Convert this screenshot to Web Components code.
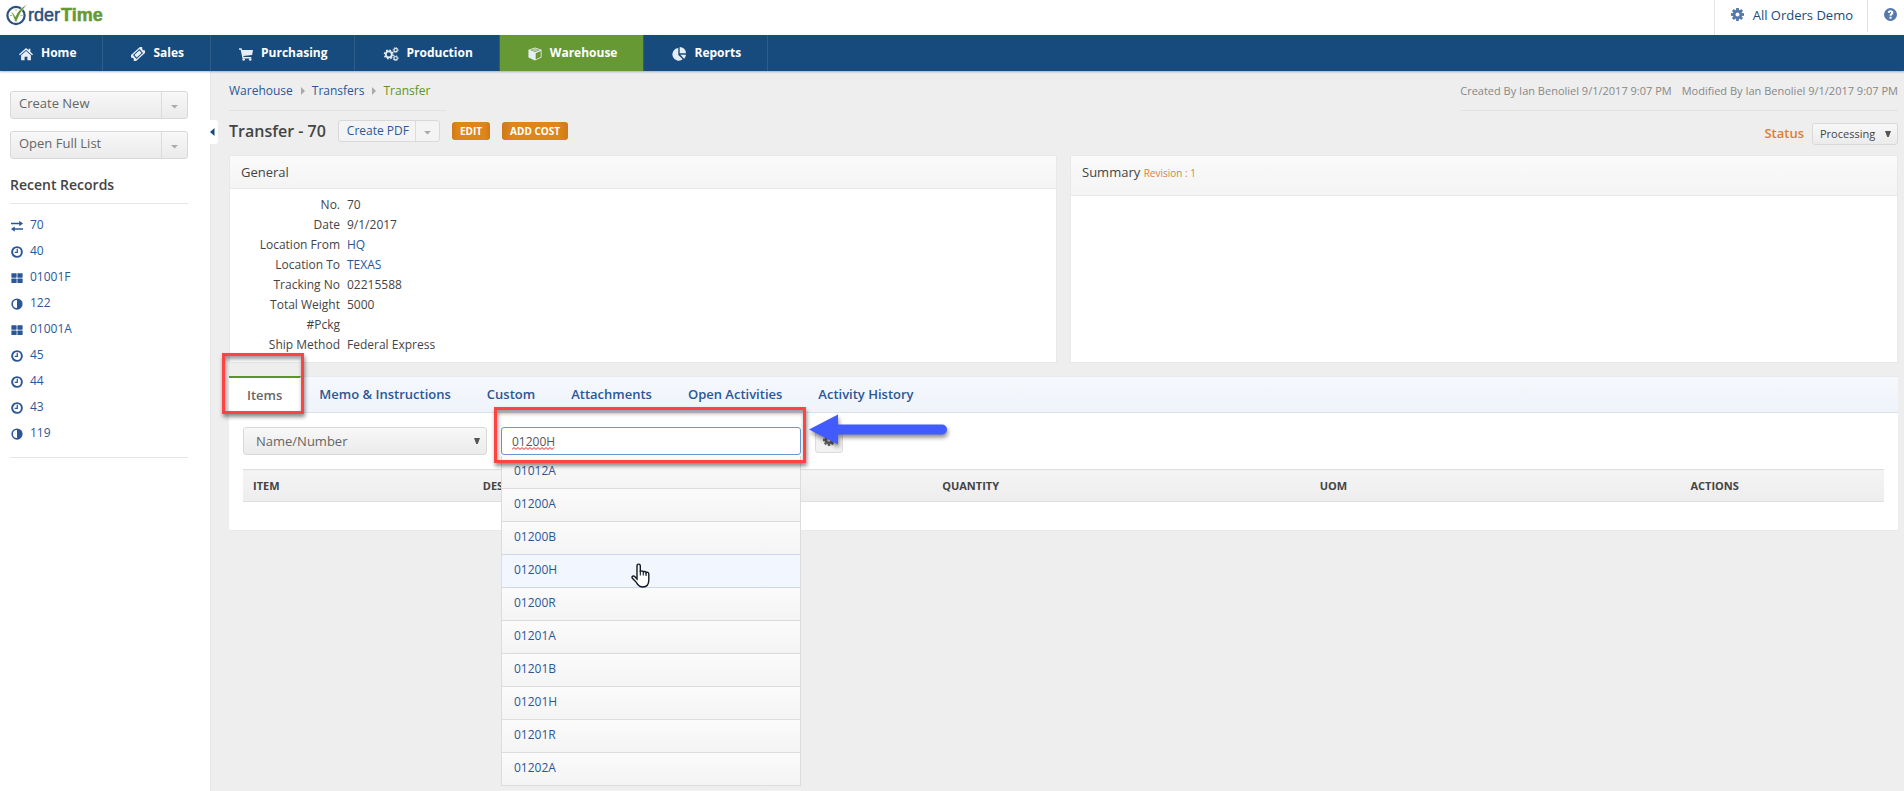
<!DOCTYPE html>
<html lang="en">
<head>
<meta charset="utf-8">
<title>OrderTime - Transfer 70</title>
<style>
  html { height: 100%; }
  body {
    margin: 0; min-height: 100%; display: flex; flex-direction: column;
    background: #eee; color: #444;
    font: 12px/20px "Open Sans", "Noto Sans", sans-serif;
    --navy: #184b7d; --green: #669933; --link: #2b5797; --line: #dedede; --orange: #dd7f33;
  }
</style>
</head>
<body>
<ot-app></ot-app>

<script>
const base = `
  *, *::before, *::after { box-sizing: border-box; }
  a { color: inherit; text-decoration: none; }
  button, input, select { font: inherit; color: inherit; margin: 0; }
  ul, ol { list-style: none; margin: 0; padding: 0; }
`;

function define(name, html, setup) {
  const template = document.createElement('template');
  template.innerHTML = html;
  customElements.define(name, class extends HTMLElement {
    connectedCallback() {
      if (this.shadowRoot) return;
      const root = this.attachShadow({ mode: 'open' });
      const style = document.createElement('style');
      style.textContent = base;
      const content = template.content.cloneNode(true);
      if (setup) setup.call(this, content);
      root.append(style, content);
    }
  });
}

const gearTeeth = (cx, cy, r, w, n) => Array.from({ length: n }, (_, i) =>
  `<rect x="${cx - w / 2}" y="${cy - r}" width="${w}" height="${r}" transform="rotate(${i * 360 / n} ${cx} ${cy})"/>`).join('');
const gear = `<mask id="m"><rect width="16" height="16" fill="#fff"/><circle cx="8" cy="8" r="2.4" fill="#000"/></mask><g mask="url(#m)"><circle cx="8" cy="8" r="5.8"/>${gearTeeth(8, 8, 8, 3.4, 8)}</g>`;

const icons = {
  home: '<path d="M8 1.2 0 8.2l1 1.2L8 3.4l7 6 1-1.2-3-2.7V2h-2v1.8z"/><path d="M8 4.6 2.4 9.4V15h4v-4h3.2v4h4V9.4z"/>',
  ticket: '<g transform="rotate(-42 8 8)"><path fill-rule="evenodd" d="M-.5 3.5h17v2.7a1.9 1.9 0 0 0 0 3.6v2.7h-17V9.800a1.900 1.900 0 0 0 0-3.600zM3 5v6h10V5z"/><path d="M4.200 6h7.600v4H4.200z"/></g>',
  cart: '<path d="M0 1.500h3l.5 2H16l-1 5.700-10 1 .3 1.300H14V13H4L1.900 3H0z"/><circle cx="5.300" cy="14.300" r="1.500"/><circle cx="12.800" cy="14.300" r="1.500"/>',
  gears: `<g fill="none" stroke="currentColor"><circle cx="5.500" cy="8.500" r="3.400" stroke-width="2"/><circle cx="5.500" cy="8.500" r="4.900" stroke-width="1.800" stroke-dasharray="1.950 1.900"/><circle cx="13.300" cy="3.500" r="1.900" stroke-width="1.300"/><circle cx="13.300" cy="3.500" r="2.900" stroke-width="1" stroke-dasharray="1.200 1.070"/><circle cx="13.300" cy="12.800" r="1.900" stroke-width="1.300"/><circle cx="13.300" cy="12.800" r="2.900" stroke-width="1" stroke-dasharray="1.200 1.070"/></g>`,
  box: '<path fill-rule="evenodd" d="M8 .5 15.500 3v9L8 15.500.5 12V3zM8 1.700 2.300 3.500 8 5.800l5.700-2.300zM8.800 7v7.200l5.700-2.700V4.700z"/><path d="M3.600 3.500 8 2.100l4.400 1.400L8 5.200z" opacity=".6"/>',
  pie: '<path d="M7.200 1.200V9l5 5A7.200 7.200 0 1 1 7.200 1.200z"/><path d="M8.800 0A7.200 7.200 0 0 1 16 7.200H8.800z"/><path d="M9.500 8.800H16a7.200 7.200 0 0 1-2.200 4.500z"/>',
  gear,
  help: '<path fill-rule="evenodd" d="M8 0a8 8 0 1 0 0 16A8 8 0 0 0 8 0zM4.700 5.800C4.800 3.800 6.200 2.800 8.100 2.800c2.100 0 3.500 1.200 3.500 2.900 0 2-2.300 2.500-2.300 3.800H6.800c0-2.500 2.100-2.700 2.100-3.700 0-.5-.4-.8-.9-.8-.6 0-.9.400-1 1zM6.800 10.700h2.500v2.400H6.800z"/>',
  swap: '<path d="M0 3.700h11V1l5 3.700-5 3.700V5.700H0zM16 11H5V8.500L0 12l5 3.700V13h11z"/>',
  clock: '<g fill="none" stroke="currentColor"><circle cx="8" cy="8" r="6.500" stroke-width="2.600"/><path d="M8.400 3.800v4.700H5" stroke-width="1.700"/></g>',
  grid: '<rect x=".5" y="1.500" width="7" height="6" rx=".8"/><rect x="8.500" y="1.500" width="7" height="6" rx=".8"/><rect x=".5" y="8.800" width="7" height="6" rx=".8"/><rect x="8.500" y="8.800" width="7" height="6" rx=".8"/>',
  half: '<path fill-rule="evenodd" d="M8 .5a7.500 7.500 0 1 0 0 15 7.500 7.500 0 0 0 0-15zM8 2.600v10.800A5.400 5.400 0 0 1 8 2.600z"/>',
  down: '<path d="M2 5.500h12L8 11.500z"/>',
  left: '<path d="M9 0v16L0 8z"/>',
  select: '<path d="M2 2h12L9.500 14h-3z"/>'
};

define('ot-icon', `
  <style>
    :host { display: inline-block; width: 12px; height: 12px; flex: none; }
    svg { display: block; width: 100%; height: 100%; fill: currentColor; }
  </style>
  <svg viewBox="0 0 16 16" aria-hidden="true"></svg>`,
  function (root) { root.querySelector('svg').innerHTML = icons[this.getAttribute('name')]; });

define('ot-logo', `
  <style>
    :host { display: flex; align-items: center; height: 30px; margin-left: 6px; }
    a { display: flex; gap: 1px; align-items: center; color: #2a5082; font: 18px/26px "Liberation Sans", Arial, sans-serif; -webkit-text-stroke: 0.5px; }
    b { color: var(--green); }
    svg { width: 21px; height: 22px; }
  </style>
  <a href="#"><svg viewBox="0 0 21 22" aria-label="O">
    <circle cx="10" cy="11.500" r="8.600" fill="none" stroke="#2a5082" stroke-width="2.200"/>
    <path d="M10 5v2M10 16.500v2M4 11.500h2M14.500 11.500h2" stroke="#9bb878" stroke-width="1"/>
    <path d="M5 8c2.200.8 3.300 2.500 4.300 4.700C12 7 15.500 3 21 .8 16.500 5 13.200 10.500 10.500 17.500H9C8 13.800 6.800 10.800 5 8z" fill="#669933" stroke="#fff" stroke-width=".4"/>
  </svg><span>rder</span><b>Time</b></a>`);

define('ot-topbar', `
  <style>
    :host { display: flex; justify-content: space-between; height: 35px; background: #fff; color: var(--navy); }
    nav { display: flex; font-size: 13px; }
    a { display: flex; gap: 9px; padding: 4px 14px 0 16px; border-left: 1px solid #e4e4e4; height: 35px; line-height: 22px; }
    a + a { padding: 4px 7px 0 16px; height: 32px; }
    ot-icon { color: #5578ad; width: 13px; height: 13px; margin-top: 4px; }
  </style>
  <ot-logo></ot-logo>
  <nav aria-label="Account">
    <a href="#"><ot-icon name="gear"></ot-icon>All Orders Demo</a>
    <a href="#" aria-label="Help"><ot-icon name="help"></ot-icon></a>
  </nav>`);

define('ot-nav-item', `
  <style>
    :host { display: block; border-right: 1px solid #2e5d8b; }
    :host([active]) { background: var(--green); }
    a { display: flex; gap: 8px; padding: 0 26px 0 28px; height: 36px; line-height: 36px; color: #fff; font-weight: 700; }
    :host(:first-child) a { padding-left: 19px; }
    ot-icon { width: 14px; height: 14px; margin-top: 12px; color: #e6edf4; }
    ot-icon[name=gears] { width: 16px; }
  </style>
  <a href="#"><ot-icon></ot-icon><span><slot></slot></span></a>`,
  function (root) { root.querySelector('ot-icon').setAttribute('name', this.getAttribute('icon')); });

define('ot-nav', `
  <style>
    :host { display: block; background: var(--navy); box-shadow: 0 1px 2px rgba(24,50,100,.35); position: relative; z-index: 1; }
    nav { display: flex; }
  </style>
  <nav aria-label="Main">
    <ot-nav-item icon="home">Home</ot-nav-item>
    <ot-nav-item icon="ticket">Sales</ot-nav-item>
    <ot-nav-item icon="cart">Purchasing</ot-nav-item>
    <ot-nav-item icon="gears">Production</ot-nav-item>
    <ot-nav-item icon="box" active>Warehouse</ot-nav-item>
    <ot-nav-item icon="pie">Reports</ot-nav-item>
  </nav>`);

define('ot-split-button', `
  <style>
    :host { display: flex; height: 28px; border: 1px solid #d9d9d9; border-radius: 3px; background: linear-gradient(#f8f8f8, #ebebeb); color: #666; font-size: 13px; }
    :host([small]) { height: 22px; color: var(--link); font-size: 12px; background: #f4f4f4; }
    button { border: 0; background: none; padding: 0 8px; cursor: pointer; }
    .label { flex: 1; text-align: left; line-height: 20px; padding-bottom: 4px; }
    .more { width: 26px; padding: 2px 0 0; border-left: 1px solid #dcdcdc; color: #aaa; display: flex; align-items: center; justify-content: center; }
    :host([small]) .label { padding: 0 6px 0 8px; }
    :host([small]) .more { width: 24px; }
    ot-icon { width: 9px; height: 9px; }
  </style>
  <button class="label"><slot></slot></button>
  <button class="more" aria-label="More options"><ot-icon name="down"></ot-icon></button>`);

define('ot-record', `
  <style>
    :host { display: block; height: 26px; }
    a { display: flex; gap: 7px; align-items: center; height: 26px; color: var(--link); padding-left: 1px; }
    ot-icon { margin-top: 2px; }
  </style>
  <a href="#"><ot-icon></ot-icon><span><slot></slot></span></a>`,
  function (root) { root.querySelector('ot-icon').setAttribute('name', this.getAttribute('icon')); });

define('ot-sidebar', `
  <style>
    :host { display: block; position: relative; width: 210px; flex: none; background: #fff; padding: 20px 22px 0 10px; }
    .actions { display: grid; gap: 12px; }
    h2 { margin: 16px 0 0; padding-bottom: 8px; font-size: 14px; line-height: 20px; font-weight: 600; border-bottom: 1px solid #e6e6e6; }
    .records { padding: 8px 0 11px; border-bottom: 1px solid #e6e6e6; }
    .collapse { position: absolute; left: 100%; top: 49px; width: 8px; height: 24px; padding: 0; border: 0; border-radius: 0 3px 3px 0; background: #fff; color: var(--navy); display: flex; align-items: center; justify-content: flex-start; }
    .collapse ot-icon { width: 8px; height: 8px; }
  </style>
  <div class="actions">
    <ot-split-button>Create New</ot-split-button>
    <ot-split-button>Open Full List</ot-split-button>
  </div>
  <h2>Recent Records</h2>
  <div class="records">
    <ot-record icon="swap">70</ot-record>
    <ot-record icon="clock">40</ot-record>
    <ot-record icon="grid">01001F</ot-record>
    <ot-record icon="half">122</ot-record>
    <ot-record icon="grid">01001A</ot-record>
    <ot-record icon="clock">45</ot-record>
    <ot-record icon="clock">44</ot-record>
    <ot-record icon="clock">43</ot-record>
    <ot-record icon="half">119</ot-record>
  </div>
  <button class="collapse" aria-label="Collapse sidebar"><ot-icon name="left"></ot-icon></button>`);

define('ot-select', `
  <style>
    :host { display: grid; align-items: center; height: 28px; color: #666; font-size: 13px; }
    :host([small]) { height: 22px; color: #444; font-size: 11px; }
    select, ot-icon { grid-area: 1 / 1; }
    select { appearance: none; width: 100%; height: 100%; border: 1px solid #d9d9d9; border-radius: 3px; background: linear-gradient(#f8f8f8, #ebebeb); padding: 0 24px 0 12px; }
    :host([small]) select { padding: 0 21px 0 7px; }
    ot-icon { width: 8px; height: 8px; justify-self: end; margin-right: 6px; color: #555; pointer-events: none; }
  </style>
  <select><option></option></select><ot-icon name="select"></ot-icon>`,
  function (root) {
    root.querySelector('option').textContent = this.getAttribute('value');
    root.querySelector('select').setAttribute('aria-label', this.getAttribute('label'));
  });

define('ot-page-head', `
  <style>
    :host { display: block; }
    .row { display: flex; justify-content: space-between; }
    ol { display: flex; gap: 8px; align-items: center; width: 217px; height: 40px; border-bottom: 1px solid #e2e2e2; color: var(--link); font-size: 12px; }
    li { display: flex; align-items: center; gap: 7px; }
    li + li::before { content: ""; border: 4px solid transparent; border-left-color: #aaa; border-right: 0; }
    li:last-child { color: #5c9425; }
    .audit { display: flex; gap: 10px; align-items: center; height: 40px; border-bottom: 1px solid #e2e2e2; color: #888; font-size: 11px; }
    .bar { display: flex; align-items: center; height: 40px; margin-bottom: 4px; }
    h1 { margin: 0 12px 0 0; font-size: 16px; line-height: 24px; font-weight: 600; }
    .action { height: 18px; padding: 0 8px; margin-left: 12px; border: 0; border-radius: 3px; background: linear-gradient(90deg, #cf7a18, #dd861a 15% 85%, #cf7a18); color: #fff; font-size: 10px; line-height: 18px; font-weight: 700; cursor: pointer; }
    .status { color: var(--orange); font-size: 13px; font-weight: 600; margin: 4px 8px 0 0; }
    ot-select { margin-top: 5px; }
  </style>
  <div class="row">
    <ol><li><a href="#">Warehouse</a></li><li><a href="#">Transfers</a></li><li>Transfer</li></ol>
    <div class="audit"><span>Created By Ian Benoliel 9/1/2017 9:07 PM</span><span>Modified By Ian Benoliel 9/1/2017 9:07 PM</span></div>
  </div>
  <div class="row">
    <div class="bar">
      <h1>Transfer - 70</h1>
      <ot-split-button small>Create PDF</ot-split-button>
      <button class="action">EDIT</button>
      <button class="action">ADD COST</button>
    </div>
    <div class="bar"><span class="status">Status</span><ot-select small label="Status" value="Processing"></ot-select></div>
  </div>`);

define('ot-panel', `
  <style>
    :host { display: flex; flex-direction: column; background: #fff; border: 1px solid #e8e8e8; }
    header { padding: 6px 11px; height: 33px; background: linear-gradient(#fafafa, #f4f4f4); border-bottom: 1px solid #e8e8e8; font-size: 13px; }
    :host([tall]) header { height: 40px; }
    h2 { display: inline; font: inherit; font-weight: 500; margin: 0; }
    ::slotted([slot=note]) { color: var(--orange); font-size: 10px; font-weight: 500; }
  </style>
  <header><h2><slot name="title"></slot></h2> <slot name="note"></slot></header>
  <slot></slot>`);

define('ot-field', `
  <style>
    :host { display: grid; grid-template-columns: 110px 1fr; gap: 7px; height: 20px; }
    .label { text-align: right; font-weight: 500; }
  </style>
  <span class="label"></span><span><slot></slot></span>`,
  function (root) { root.querySelector('.label').textContent = this.getAttribute('label'); });

define('ot-highlight', `
  <style>
    :host { display: block; position: absolute; z-index: 5; border: 3px solid #ff4343; pointer-events: none; box-shadow: 1px 3px 4px rgba(0,0,0,.45), inset 1px 3px 4px rgba(0,0,0,.4); }
  </style>`);

define('ot-tabs', `
  <style>
    :host { display: block; }
    nav { display: flex; height: 37px; background: linear-gradient(#f5f8fc, #eff4fb); border-top: 1px solid #e6e9ee; border-bottom: 1px solid #d9e2ec; color: var(--link); font-size: 13px; line-height: 34px; }
    a { padding: 0 18px; font-weight: 600; }
    .on { position: relative; height: 37px; margin-top: -1px; border-top: 2px solid #5f942a; border-right: 1px solid #fff; background: #fff; color: #666; }
    ot-highlight { inset: -25px -4px -1px -7px; }
  </style>
  <nav aria-label="Transfer details">
    <a class="on" href="#">Items<ot-highlight></ot-highlight></a>
    <a href="#">Memo &amp; Instructions</a>
    <a href="#">Custom</a>
    <a href="#">Attachments</a>
    <a href="#">Open Activities</a>
    <a href="#">Activity History</a>
  </nav>`);

define('ot-item-search', `
  <style>
    :host { display: block; position: relative; width: 300px; height: 28px; }
    input { width: 100%; height: 28px; border: 1px solid #6a95cf; border-radius: 3px; padding: 0 10px; background: #fff; color: #555; outline: 0; }
    .squiggle { position: absolute; left: 11px; top: 20px; width: 43px; height: 3px; }
    ul { position: absolute; z-index: 2; top: 29px; left: 0; right: 0; border: 1px solid #dcdcdc; border-top: 0; }
    li { height: 33px; border-bottom: 1px solid #dcdcdc; background: linear-gradient(#fbfbfb, #f4f4f4); padding: 5px 12px; color: var(--link); }
    li:last-child { border-bottom: 0; height: 32px; }
    li:has(+ .hover) { border-color: #cdd9e8; }
    .hover { background: #f2f6fe; border-color: #cdd9e8; }
    .cursor { position: absolute; z-index: 3; left: 130px; top: 136px; width: 19px; height: 25px; }
    .arrow { position: absolute; z-index: 6; left: 307px; top: -15px; width: 146px; height: 40px; overflow: visible; filter: drop-shadow(1px 3px 2px rgba(0,0,0,.45)); }
    ot-highlight { inset: -20px -5px -8px -7px; }
  </style>
  <input value="01200H" aria-label="Item search" spellcheck="false">
  <svg class="squiggle" viewBox="0 0 43 3" aria-hidden="true"><path d="M0 2.500l2-2 2 2 2-2 2 2 2-2 2 2 2-2 2 2 2-2 2 2 2-2 2 2 2-2 2 2 2-2 2 2 2-2 2 2 2-2 2 2 2-2" fill="none" stroke="#e81c1c"/></svg>
  <ul><li>01012A</li><li>01200A</li><li>01200B</li><li class="hover">01200H</li><li>01200R</li><li>01201A</li><li>01201B</li><li>01201H</li><li>01201R</li><li>01202A</li></ul>
  <svg class="cursor" viewBox="0 0 19 25" aria-hidden="true"><path d="M6 13V3c0-2.500 3.300-2.500 3.300 0v6c.3-1.600 2.900-1.500 3 .3.500-1.300 2.700-1.100 2.800.5.700-.9 2.700-.6 2.700 1.300v6c0 3.900-1.800 6.900-6 6.900-3.500 0-4.800-1.600-6.300-4.400L1.200 15c-.8-1.700 1.300-2.800 2.700-1.300L6 16z" fill="#fff" stroke="#111827" stroke-width="1.400"/><path d="M9.300 8v4.500M12.300 9v3.500M15.100 10v3" stroke="#111827" stroke-width="1.100"/></svg>
  <ot-highlight></ot-highlight>
  <svg class="arrow" viewBox="0 0 146 40" aria-hidden="true"><path d="M1 17.500 30 2.500v10h104a5 5 0 0 1 0 10H30v10z" fill="#425bff"/></svg>`);

define('ot-items-table', `
  <style>
    :host { display: block; }
    table { width: 100%; table-layout: fixed; border-collapse: collapse; }
    th { height: 32px; padding: 0 10px; text-align: left; font-size: 11px; line-height: 20px; font-weight: 700; background: linear-gradient(#f4f4f4, #ededed); border: solid #dfdfdf; border-width: 1px 0; }
    .item { width: 14%; } .desc { width: 28%; } .qty { width: 23%; } .uom { width: 22.600%; }
  </style>
  <table><thead><tr>
    <th class="item">ITEM</th><th class="desc">DESCRIPTION</th><th class="qty">QUANTITY</th><th class="uom">UOM</th><th>ACTIONS</th>
  </tr></thead></table>`);

define('ot-detail', `
  <style>
    :host { display: block; margin-top: 13px; background: #fff; border-bottom: 1px solid #e8e8e8; }
    .filters { display: flex; gap: 14px; padding: 14px; }
    ot-select { width: 244px; }
    .tool { width: 28px; height: 26px; padding: 0; border: 1px solid #dcdcdc; border-radius: 3px; background: #f2f2f2; color: #666; display: flex; align-items: center; justify-content: center; }
    ot-items-table { margin: 0 14px 28px; }
  </style>
  <ot-tabs></ot-tabs>
  <div class="filters">
    <ot-select label="Search by" value="Name/Number"></ot-select>
    <ot-item-search></ot-item-search>
    <button class="tool" aria-label="Settings"><ot-icon name="gear"></ot-icon></button>
  </div>
  <ot-items-table></ot-items-table>`);

define('ot-app', `
  <style>
    :host { display: flex; flex-direction: column; flex: 1; }
    .body { display: flex; flex: 1; }
    main { flex: 1; min-width: 0; padding: 0 6px 0 18px; border-left: 1px solid #e6e6e6; }
    .panels { display: grid; grid-template-columns: 1fr 1fr; gap: 13px; }
    .fields { padding: 6px 0 7px; }
    .fields a { color: var(--link); }
  </style>
  <ot-topbar></ot-topbar>
  <ot-nav></ot-nav>
  <div class="body">
    <ot-sidebar></ot-sidebar>
    <main>
      <ot-page-head></ot-page-head>
      <div class="panels">
        <ot-panel><span slot="title">General</span>
          <div class="fields">
            <ot-field label="No.">70</ot-field>
            <ot-field label="Date">9/1/2017</ot-field>
            <ot-field label="Location From"><a href="#">HQ</a></ot-field>
            <ot-field label="Location To"><a href="#">TEXAS</a></ot-field>
            <ot-field label="Tracking No">02215588</ot-field>
            <ot-field label="Total Weight">5000</ot-field>
            <ot-field label="#Pckg"></ot-field>
            <ot-field label="Ship Method">Federal Express</ot-field>
          </div>
        </ot-panel>
        <ot-panel tall><span slot="title">Summary</span><span slot="note">Revision : 1</span></ot-panel>
      </div>
      <ot-detail></ot-detail>
    </main>
  </div>`);
</script>
</body>
</html>
